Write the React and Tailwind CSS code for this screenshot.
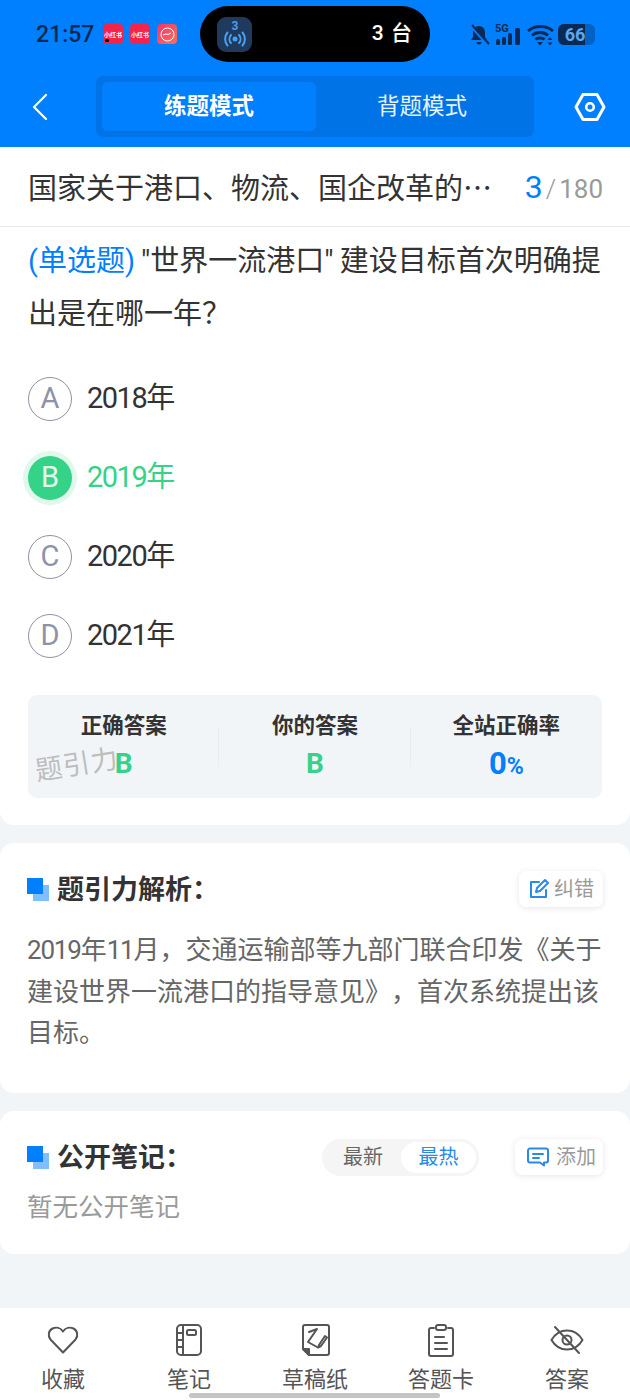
import React from "react";

const font = { fontFamily: '"Roboto", "Noto Sans CJK SC", sans-serif' };

const SectionMark = () => (
  <span className="relative block w-[23px] h-[23px] shrink-0">
    <span className="absolute left-[6px] top-[7px] w-[16px] h-[16px] bg-[#80bfff]" />
    <span className="absolute left-0 top-0 w-[16px] h-[16px] bg-[#0080ff]" />
  </span>
);

const Option = ({ letter, text, active }) => (
  <div className="flex items-center h-[79px]">
    {active ? (
      <span className="w-[44px] h-[44px] rounded-full bg-[#35d387] text-[#e4f9ee] text-[29px] flex items-center justify-center shadow-[0_0_0_5px_#e1f8ec]">
        {letter}
      </span>
    ) : (
      <span className="w-[44px] h-[44px] rounded-full border-[1.5px] border-[#8d92a8] text-[#8d92a8] text-[29px] flex items-center justify-center">
        {letter}
      </span>
    )}
    <span className={`ml-[15px] text-[29px] tracking-[-1.5px] ${active ? "text-[#35d387]" : "text-[#333333]"}`}>{text}</span>
  </div>
);

const Stat = ({ label, children, divider }) => (
  <div className="relative flex-1 flex flex-col items-center pt-[16px]">
    <span className="text-[21.5px] leading-[30px] font-bold text-[#333333]">{label}</span>
    <span className="mt-[5px] leading-[36px] font-bold">{children}</span>
    {divider && <span className="absolute right-0 top-[32px] h-[40px] w-px bg-[#e9edf1]" />}
  </div>
);

const TabItem = ({ label, children }) => (
  <div className="flex-1 flex flex-col items-center">
    <span className="h-[42px] flex items-center justify-center text-[#555555]">{children}</span>
    <span className="mt-[4px] text-[22px] leading-[30px] text-[#555555]">{label}</span>
  </div>
);

export default function App() {
  return (
    <div style={font} className="w-[630px] h-[1400px] bg-[#f2f5f8] relative overflow-hidden flex flex-col">
      {/* header */}
      <div className="h-[147px] bg-[#0080ff] shrink-0">
        <div className="relative h-[76px]">
          <div className="absolute left-[36px] top-[21px] text-[23px] leading-[28px] font-medium text-[#0a2a55]">21:57</div>
          <div className="absolute left-[103px] top-[24px] flex gap-[7px]">
            <span className="relative w-[20px] h-[20px] rounded-[4px] bg-[#f5234a] text-white text-[6px] font-bold flex items-center justify-center whitespace-nowrap overflow-hidden">
              小红书
              <span className="absolute left-[2px] bottom-[2px] w-[4px] h-[3px] rounded-full bg-black" />
            </span>
            <span className="w-[20px] h-[20px] rounded-[4px] bg-[#f5234a] text-white text-[6px] font-bold flex items-center justify-center whitespace-nowrap overflow-hidden">小红书</span>
            <span className="w-[20px] h-[20px] rounded-[4px] bg-gradient-to-br from-[#f0306a] to-[#f9705a] flex items-center justify-center">
              <svg width="15" height="15" viewBox="0 0 15 15" fill="none" stroke="white" strokeWidth="1">
                <circle cx="7.500" cy="7.500" r="6.500" />
                <path d="M3 8l3-1 2 .5L11 6" />
              </svg>
            </span>
          </div>
          {/* island */}
          <div className="absolute left-[200px] top-[6px] w-[230px] h-[56px] rounded-[28px] bg-black flex items-center pl-[17px] pr-[17px] justify-between">
            <span className="w-[35px] h-[35px] rounded-[9px] bg-[#1f3a5c] flex items-center justify-center text-[#4a9ff0]">
              <svg width="28" height="32" viewBox="0 0 28 32" fill="none" stroke="currentColor" strokeWidth="2" strokeLinecap="round">
                <text x="14" y="12" textAnchor="middle" fontSize="12" fontWeight="700" fill="currentColor" stroke="none">3</text>
                <circle cx="14" cy="21" r="2.500" fill="currentColor" stroke="none" />
                <path d="M10 17a6 6 0 0 0 0 8M18 17a6 6 0 0 1 0 8M6.500 14.500a10 10 0 0 0 0 13M21.500 14.500a10 10 0 0 1 0 13" />
              </svg>
            </span>
            <span className="text-white text-[21px] font-medium tracking-[1px]">3 台</span>
          </div>
          {/* status icons */}
          <div className="absolute left-[469px] top-[23px] flex items-center">
            <svg width="21" height="22" viewBox="0 0 21 22" className="text-[#0a2a55]" fill="currentColor">
              <path d="M10 2a6 6 0 0 0-6 6v5l-2 3h16l-2-3V8a6 6 0 0 0-6-6zM7.500 18h5a2.500 2.500 0 0 1-5 0z" />
              <path d="M1 1.500l17 19" stroke="#0080ff" strokeWidth="2" />
              <path d="M3 1l17 19" stroke="currentColor" strokeWidth="2" />
            </svg>
            <svg width="26" height="23" viewBox="0 0 26 23" className="ml-[5px] text-[#0a2a55]" fill="currentColor">
              <text x="0" y="9" fontSize="11" fontWeight="700">5G</text>
              <rect x="1" y="16" width="4" height="6" rx="1.500" />
              <rect x="7" y="14" width="4" height="8" rx="1.500" />
              <rect x="13" y="10" width="4" height="12" rx="1.500" />
              <rect x="20" y="5" width="5" height="17" rx="1.500" />
            </svg>
            <svg width="27" height="22" viewBox="0 0 27 22" className="ml-[6px] text-[#0a2a55]" fill="none" stroke="currentColor" strokeWidth="2.800">
              <path d="M1 7c7-6 18-6 25 0M5 11.500c4-4 12-4 16 0M8.500 15.500c2-2 7-2 9 0" />
              <path d="M10 18h6l-3 3.500z" fill="currentColor" stroke="none" />
              <path d="M23 13l-2.500 3h5zM23 21.500l-2.500-3h5z" fill="currentColor" stroke="none" />
            </svg>
            <span className="ml-[4px] w-[37px] h-[21px] rounded-[6px] bg-[#0062c4] overflow-hidden relative flex">
              <span className="w-[27px] bg-[#0a2a55]" />
              <span className="absolute inset-0 flex items-center justify-center pr-[3px] text-[#5ea6ee] text-[18px] font-bold leading-none">66</span>
            </span>
          </div>
        </div>
        <div className="flex items-center h-[61px]">
          <svg width="18" height="28" viewBox="0 0 18 28" className="ml-[31px]" fill="none" stroke="white" strokeWidth="2.200" strokeLinecap="round" strokeLinejoin="round">
            <path d="M15 2L3 14l12 12" />
          </svg>
          <div className="ml-[47px] w-[438px] h-[61px] rounded-[7px] bg-[#0073e6] p-[6px] flex">
            <div className="w-[214px] rounded-[6px] bg-[#0080ff] flex items-center justify-center text-white text-[22.5px] font-bold">练题模式</div>
            <div className="flex-1 flex items-center justify-center text-[#e8f3ff] text-[22.5px]">背题模式</div>
          </div>
          <svg width="32" height="30" viewBox="0 0 32 30" className="ml-[40px]" fill="none" stroke="white" strokeWidth="3" strokeLinejoin="round">
            <path d="M9 2.500h14L30 15l-7 12.500H9L2 15z" />
            <circle cx="16" cy="15" r="3.800" strokeWidth="2.600" />
          </svg>
        </div>
      </div>

      {/* question card */}
      <div className="bg-white rounded-b-[14px] h-[678px] shrink-0">
        <div className="h-[80px] border-b border-[#e6e8eb] pl-[28px] pr-[27px] flex items-center justify-between">
          <span className="pt-[3px] text-[29px] text-[#333333] whitespace-nowrap">
            国家关于港口、物流、国企改革的<span className="font-['Noto_Sans_CJK_SC']">⋯</span>
          </span>
          <span className="flex items-baseline">
            <span className="text-[32px] text-[#0080ff]">3</span>
            <span className="ml-[3px] text-[26px] text-[#9a9a9a] font-light">/</span>
            <span className="ml-[3px] text-[26px] text-[#9a9a9a]">180</span>
          </span>
        </div>
        <div className="px-[28px] pt-[8px]">
          <p className="text-[29px] leading-[53px] text-[#333333]">
            <span className="text-[#0080ff] mr-[6px]">(单选题)</span>"世界一流港口"<span className="ml-[6px]">建设目标首次明确提出是在哪一年&#xFF1F;</span>
          </p>
          <div className="mt-[18px]">
            <Option letter="A" text="2018年" />
            <Option letter="B" text="2019年" active />
            <Option letter="C" text="2020年" />
            <Option letter="D" text="2021年" />
          </div>
          <div className="relative mt-[20px] h-[103px] rounded-[9px] bg-[#f2f5f8] flex">
            <Stat label="正确答案" divider><span className="text-[28px] text-[#35d387]">B</span></Stat>
            <Stat label="你的答案" divider><span className="text-[28px] text-[#35d387]">B</span></Stat>
            <Stat label="全站正确率">
              <span className="text-[31px] text-[#0080ff]">0</span>
              <span className="text-[23px] text-[#0080ff]">%</span>
            </Stat>
            <span className="absolute left-[7px] top-[54px] text-[27px] leading-[32px] tracking-[1px] text-[#bdbdbd] -rotate-[9deg] whitespace-nowrap">题引力</span>
          </div>
        </div>
      </div>

      {/* analysis card */}
      <div className="mt-[18px] bg-white rounded-[14px] h-[250px] shrink-0 pl-[27px] pr-[27px] pt-[28px]">
        <div className="flex items-center justify-between h-[36px]">
          <div className="flex items-center gap-[7px]">
            <SectionMark />
            <span className="mt-[2px] text-[27px] font-bold text-[#333333]">题引力解析&#xFF1A;</span>
          </div>
          <div className="w-[84px] h-[36px] rounded-[7px] bg-white shadow-[0_1px_6px_rgba(0,0,0,0.1)] flex items-center justify-center gap-[4px]">
            <svg width="22" height="22" viewBox="0 0 22 22" fill="none" stroke="#2a8ae8" strokeWidth="2" strokeLinecap="round" strokeLinejoin="round">
              <path d="M18 12v7H3V4h8" />
              <path d="M8 14l1-4 8-8 3 3-8 8z" />
            </svg>
            <span className="text-[20px] text-[#9a9a9a]">纠错</span>
          </div>
        </div>
        <p className="mt-[23px] text-[26px] leading-[41.5px] text-[#666666] [text-spacing-trim:space-all]">
          <span className="tracking-[-1.2px]">2019</span>年<span className="tracking-[-1.2px]">11</span>月&#xFF0C;交通运输部等九部门联合印发《关于建设世界一流港口的指导意见》&#xFF0C;首次系统提出该目标。
        </p>
      </div>

      {/* notes card */}
      <div className="mt-[18px] bg-white rounded-[14px] h-[143px] shrink-0 pl-[27px] pr-[27px] pt-[28px]">
        <div className="flex items-center h-[36px]">
          <SectionMark />
          <span className="mt-[2px] ml-[7px] text-[27px] font-bold text-[#333333]">公开笔记&#xFF1A;</span>
          <div className="ml-auto w-[157px] h-[37px] rounded-full bg-[#f5f5f5] p-[3px] flex">
            <span className="w-[76px] flex items-center justify-center text-[20px] text-[#666666]">最新</span>
            <span className="flex-1 rounded-full bg-white flex items-center justify-center text-[20px] text-[#2a8ae8]">最热</span>
          </div>
          <div className="ml-[36px] w-[88px] h-[36px] rounded-[7px] bg-white shadow-[0_1px_6px_rgba(0,0,0,0.1)] flex items-center justify-center gap-[7px] pl-[5px]">
            <svg width="22" height="20" viewBox="0 0 22 20" fill="none" stroke="#2a8ae8" strokeWidth="2" strokeLinecap="round" strokeLinejoin="round">
              <path d="M3 1.500h16a2 2 0 0 1 2 2v10a2 2 0 0 1-2 2h-2v3l-4-3H3a2 2 0 0 1-2-2v-10a2 2 0 0 1 2-2z" />
              <path d="M6 7h10M6 11h6" />
            </svg>
            <span className="text-[20px] text-[#9a9a9a]">添加</span>
          </div>
        </div>
        <p className="mt-[14px] text-[25.5px] leading-[36px] text-[#9a9a9a]">暂无公开笔记</p>
      </div>

      {/* bottom tabs */}
      <div className="absolute left-0 right-0 bottom-0 h-[92px] bg-white flex pt-[11px]">
        <TabItem label="收藏">
          <svg width="32" height="30" viewBox="0 0 32 30" fill="none" stroke="currentColor" strokeWidth="2" strokeLinejoin="round">
            <path d="M16 27.500L3.500 14.500C0.500 11 1.500 5.500 5.500 3.500 9 2 13.500 2.500 16 6.500 18.500 2.500 23 2 26.500 3.500 30.500 5.500 31.500 11 28.500 14.500z" />
          </svg>
        </TabItem>
        <TabItem label="笔记">
          <svg width="28" height="34" viewBox="0 0 28 34" fill="none" stroke="currentColor" strokeWidth="2" strokeLinejoin="round">
            <rect x="2" y="2" width="24" height="30" rx="4" />
            <path d="M8 2v30M2 10h6M2 17h6M2 24h6" />
            <rect x="12" y="7" width="9" height="5" rx="1.500" />
          </svg>
        </TabItem>
        <TabItem label="草稿纸">
          <svg width="29" height="34" viewBox="0 0 29 34" fill="none" stroke="currentColor" strokeWidth="2" strokeLinejoin="round" strokeLinecap="round">
            <path d="M8 32h18a2 2 0 0 0 2-2V4a2 2 0 0 0-2-2H4a2 2 0 0 0-2 2v22z" />
            <path d="M2 26h6v6z" fill="currentColor" />
            <path d="M8 9l8-3-9 13 9 5" />
            <path d="M18 22l6-9 2 1.500-6 8.500-3 1.500z" />
          </svg>
        </TabItem>
        <TabItem label="答题卡">
          <svg width="28" height="34" viewBox="0 0 28 34" fill="none" stroke="currentColor" strokeWidth="2" strokeLinejoin="round" strokeLinecap="round">
            <path d="M7 5H4a2 2 0 0 0-2 2v24a2 2 0 0 0 2 2h20a2 2 0 0 0 2-2V7a2 2 0 0 0-2-2h-3" />
            <rect x="9" y="2" width="10" height="5" rx="2" />
            <path d="M8 14h9M8 20h12M8 26h12" />
          </svg>
        </TabItem>
        <TabItem label="答案">
          <svg width="34" height="30" viewBox="0 0 34 30" fill="none" stroke="currentColor" strokeWidth="2" strokeLinecap="round" strokeLinejoin="round">
            <path d="M1.500 15C5 9 10 5.500 17 5.500S29 9 32.500 15C29 21 24 24.500 17 24.500S5 21 1.500 15z" />
            <circle cx="17" cy="15" r="4.500" />
            <path d="M5 2l24 26" />
          </svg>
        </TabItem>
      </div>
      <div className="absolute left-[189px] bottom-[2px] w-[251px] h-[5px] rounded-full bg-[#c4c4c4]" />
    </div>
  );
}
